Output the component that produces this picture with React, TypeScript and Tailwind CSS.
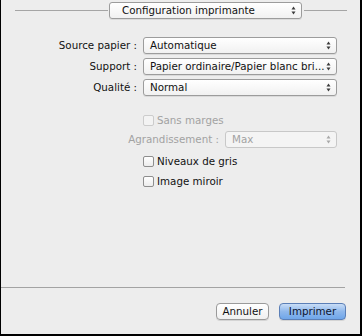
import React from "react";

const Arrows = ({ dim = false }: { dim?: boolean }) => (
  <svg width="5" height="9" viewBox="0 0 5 9" className="shrink-0">
    <path d="M0.5 3.5 L2.5 0.5 L4.5 3.5 Z" fill={dim ? "#a8a8a8" : "#3a3a3a"} />
    <path d="M0.5 5.5 L2.5 8.5 L4.5 5.5 Z" fill={dim ? "#a8a8a8" : "#3a3a3a"} />
  </svg>
);

const Popup = ({
  value,
  width,
  dim = false,
}: {
  value: string;
  width: string;
  dim?: boolean;
}) => (
  <div
    className={`${width} h-[17px] flex items-center justify-between pl-[6px] pr-[5px] rounded-[3px] border ${
      dim
        ? "border-[#c8c8c8] bg-[#f4f4f4] text-[#a2a2a2]"
        : "border-[#9c9c9c] bg-gradient-to-b from-white to-[#f1f1f1] text-[#111111] shadow-[0_1px_0_rgba(0,0,0,0.08)]"
    }`}
  >
    <span className="whitespace-nowrap">{value}</span>
    <Arrows dim={dim} />
  </div>
);

const Check = ({ label, dim = false }: { label: string; dim?: boolean }) => (
  <div className="flex items-center h-[12px] pl-[142px]">
    <div
      className={`w-[11px] h-[11px] rounded-[2px] border ${
        dim ? "border-[#cccccc] bg-[#f3f3f3]" : "border-[#8e8e8e] bg-gradient-to-b from-white to-[#ececec]"
      }`}
    />
    <span className={`ml-[3px] ${dim ? "text-[#a2a2a2]" : "text-[#111111]"}`}>{label}</span>
  </div>
);

const Row = ({ label, value }: { label: string; value: string }) => (
  <div className="flex items-center h-[17px]">
    <span className="w-[136px] text-right text-[#111111] whitespace-nowrap">{label}</span>
    <div className="ml-[6px]">
      <Popup value={value} width="w-[194px]" />
    </div>
  </div>
);

export default function App() {
  return (
    <div
      className="w-[362px] h-[336px] bg-[#ededed] border-l border-r-2 border-b-2 border-black flex flex-col text-[10.3px] leading-none"
      style={{ fontFamily: '"DejaVu Sans", Verdana, sans-serif' }}
    >
      {/* header popup */}
      <div className="mt-[2px] flex items-center h-[17px]">
        <div className="ml-[14px] w-[93px] h-px bg-[#a5a5a5]" />
        <div className="ml-[1px]">
          <Popup value="Configuration imprimante" width="w-[193px] pl-[12px]" />
        </div>
        <div className="ml-[2px] w-[43px] h-px bg-[#a5a5a5]" />
      </div>

      <div className="mt-[18px] flex flex-col gap-[4px]">
        <Row label="Source papier :" value="Automatique" />
        <Row label="Support :" value="Papier ordinaire/Papier blanc bri..." />
        <Row label="Qualité :" value="Normal" />
      </div>

      <div className="mt-[18px]">
        <Check label="Sans marges" dim />
      </div>

      <div className="mt-[5px] flex items-center h-[17px]">
        <span className="w-[218px] text-right text-[#a2a2a2] whitespace-nowrap">Agrandissement :</span>
        <div className="ml-[6px]">
          <Popup value="Max" width="w-[112px]" dim />
        </div>
      </div>

      <div className="mt-[7px] flex flex-col gap-[8px]">
        <Check label="Niveaux de gris" />
        <Check label="Image miroir" />
      </div>

      <div className="flex-1" />

      <div className="h-px w-[344px] bg-[#a3a3a3]" />

      <div className="mt-[15px] mb-[14px] flex justify-end gap-[10px] pr-[14px]">
        <button className="w-[53px] h-[17px] rounded-[4px] border border-[#9a9a9a] bg-gradient-to-b from-white to-[#f0f0f0] text-[#111111] shadow-[0_1px_0_rgba(0,0,0,0.1)]">
          Annuler
        </button>
        <button className="w-[67px] h-[17px] rounded-[4px] border border-[#5b7fb7] bg-gradient-to-b from-[#c9ddf6] via-[#8fb8ec] to-[#6fa6ea] text-[#0b1530] shadow-[0_1px_0_rgba(0,0,0,0.1)]">
          Imprimer
        </button>
      </div>
    </div>
  );
}
